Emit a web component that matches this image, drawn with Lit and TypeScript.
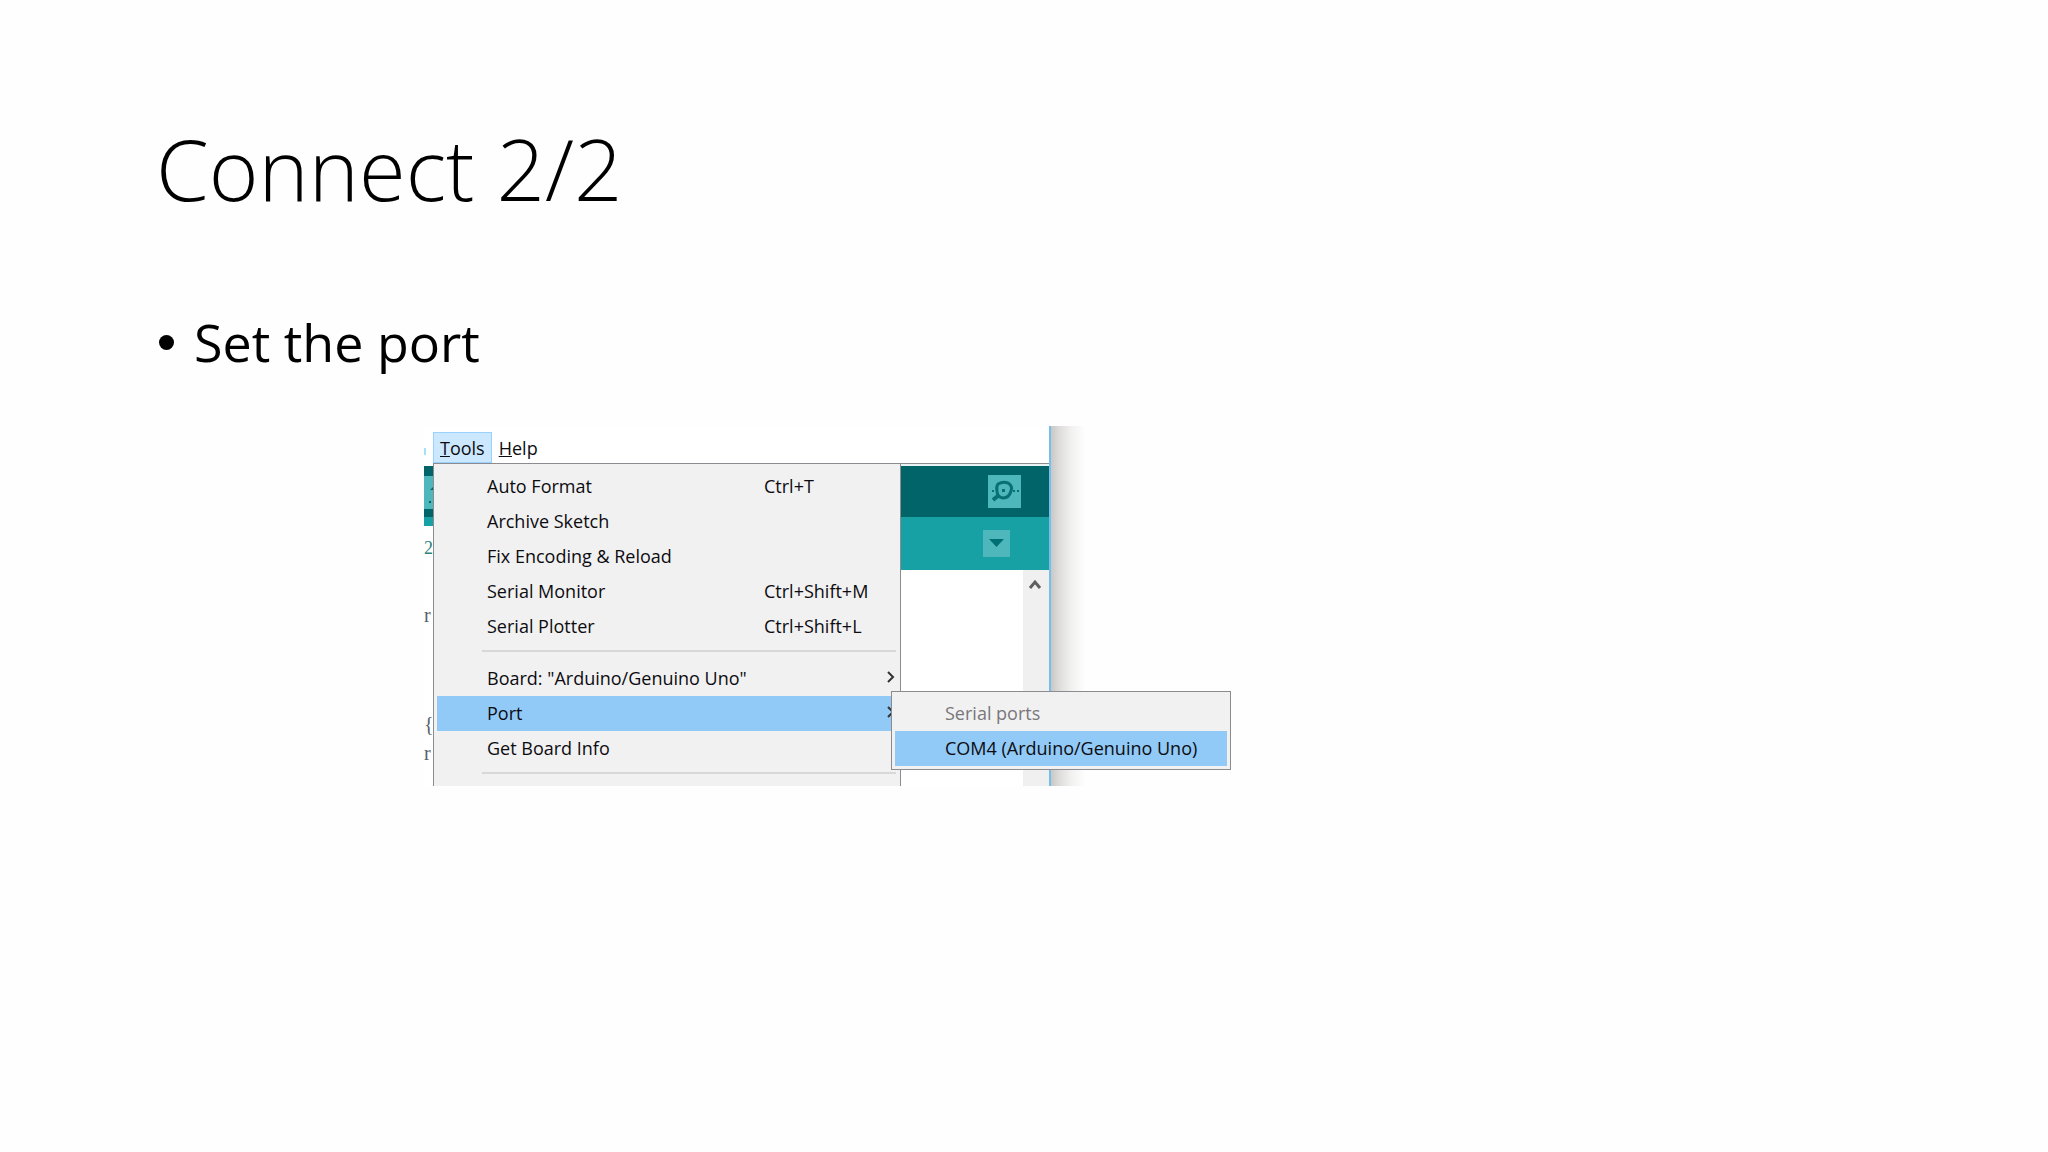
import { LitElement, html, css, svg, nothing } from "lit";
import { customElement, property } from "lit/decorators.js";

interface MenuEntry {
  label: string;
  shortcut?: string;
  submenu?: boolean;
  active?: boolean;
}

const GROUPS: MenuEntry[][] = [
  [
    { label: "Auto Format", shortcut: "Ctrl+T" },
    { label: "Archive Sketch" },
    { label: "Fix Encoding & Reload" },
    { label: "Serial Monitor", shortcut: "Ctrl+Shift+M" },
    { label: "Serial Plotter", shortcut: "Ctrl+Shift+L" },
  ],
  [
    { label: 'Board: "Arduino/Genuino Uno"', submenu: true },
    { label: "Port", submenu: true, active: true },
    { label: "Get Board Info" },
  ],
];

const chevronRight = svg`<path d="M1 1 L6 6 L1 11" fill="none" stroke="#333" stroke-width="2"/>`;

@customElement("tools-menu")
export class ToolsMenu extends LitElement {
  @property({ attribute: false }) groups: MenuEntry[][] = [];

  static styles = css`
    :host {
      display: block;
      position: relative;
      box-sizing: border-box;
      padding: 5px 4px 3px 3px;
      border: solid #8c8c90;
      border-width: 1px 1px 0;
      background: #f2f1f2;
      font-family: "Open Sans", "Noto Sans", sans-serif;
      font-size: 18px;
      line-height: 35px;
    }
    .item {
      display: grid;
      grid-template-columns: 277px 1fr auto;
      align-items: center;
      box-sizing: border-box;
      width: 100%;
      height: 35px;
      padding: 0 1px 0 50px;
      border: 0;
      background: none;
      color: #0c0c10;
      font: inherit;
      text-align: left;
      white-space: nowrap;
    }
    .active {
      background: #91c9f7;
    }
    .arrow {
      display: block;
      width: 8px;
      height: 12px;
      margin-bottom: 4px;
    }
    .separator {
      height: 2px;
      margin: 6px 0 9px 45px;
      border: 0;
      background: #d9d8d9;
    }
    .submenu {
      position: absolute;
      top: 227px;
      left: 457px;
      box-sizing: border-box;
      width: 340px;
      padding: 4px 3px 3px;
      border: 1px solid #8c8c90;
      background: #f2f1f2;
    }
    .submenu .item {
      display: block;
    }
    .submenu .item:disabled {
      color: #78777a;
    }
  `;

  private renderItem(entry: MenuEntry) {
    return html`<button class="item ${entry.active ? "active" : ""}" role="menuitem">
      <span>${entry.label}</span>
      <span>${entry.shortcut ?? nothing}</span>
      ${entry.submenu
        ? html`<svg class="arrow" viewBox="0 0 8 12" aria-hidden="true">${chevronRight}</svg>`
        : nothing}
    </button>`;
  }

  render() {
    return html`
      ${this.groups.map(
        (group) => html`${group.map((e) => this.renderItem(e))}<hr class="separator" />`
      )}
      <div class="submenu" role="menu">
        <button class="item" role="menuitem" disabled>Serial ports</button>
        <button class="item active" role="menuitem">COM4 (Arduino/Genuino Uno)</button>
      </div>
    `;
  }
}

@customElement("ide-window")
export class IdeWindow extends LitElement {
  static styles = css`
    :host {
      display: grid;
      grid-template-columns: 627px 34px;
      width: max-content;
      font-family: "Open Sans", "Noto Sans", sans-serif;
    }
    .frame {
      border-right: 2px solid #74bfec;
      background: #fff;
    }
    .menubar {
      display: flex;
      align-items: flex-end;
      height: 37px;
      font-size: 18px;
    }
    .edge {
      width: 2px;
      height: 7px;
      margin: 0 7px 8px 0;
      background: #a5e2f2;
    }
    .entry {
      box-sizing: border-box;
      height: 31px;
      padding: 0 6px;
      border: 1px solid transparent;
      background: none;
      color: #0c0c10;
      font: inherit;
      line-height: 28px;
    }
    .open {
      border-color: #99d1ff;
      background: #cce8ff;
    }
    .body {
      display: grid;
      grid-template-columns: 9px 468px 1fr;
    }
    .strip {
      display: flex;
      flex-direction: column;
      font-family: "Liberation Serif", serif;
      font-size: 20px;
      line-height: 20px;
      color: #55606a;
    }
    .strip-tools {
      height: 51px;
      box-sizing: border-box;
      margin-top: 3px;
      border: solid #006468;
      border-width: 10px 0 8px;
      background: #4db7bb;
    }
    .strip-art {
      display: block;
      width: 9px;
      height: 33px;
    }
    .strip-tabs {
      height: 9px;
      background: #17a1a5;
    }
    .number {
      margin-top: 12px;
      font-size: 18px;
      color: #2c8378;
    }
    .first {
      margin-top: 47px;
    }
    .brace {
      margin-top: 89px;
    }
    .last {
      margin-top: 9px;
    }
    .editor {
      display: flex;
      flex-direction: column;
      border-top: 1px solid #8c8c90;
    }
    .toolbar,
    .tabs {
      display: flex;
      justify-content: flex-end;
      align-items: center;
      box-sizing: border-box;
    }
    .toolbar {
      height: 53px;
      padding-right: 28px;
      border-top: 2px solid #e8f3f3;
      background: #006468;
    }
    .tabs {
      height: 53px;
      padding-right: 39px;
      background: #17a1a5;
    }
    .tool {
      padding: 0;
      border: 0;
      background: #4db7bb;
      line-height: 0;
    }
    .page {
      display: flex;
      flex: 1;
      justify-content: flex-end;
    }
    .scroll {
      width: 26px;
      background: #f1f0f1;
      line-height: 0;
    }
    .shadow {
      background: linear-gradient(90deg, #c9c8c6, #dedddb 25%, #f1f1f0 60%, #fefefe);
    }
  `;

  render() {
    return html`
      <div class="frame">
        <div class="menubar" role="menubar">
          <span class="edge"></span>
          <button class="entry open" role="menuitem"><u>T</u>ools</button>
          <button class="entry" role="menuitem"><u>H</u>elp</button>
        </div>
        <div class="body">
          <div class="strip">
            <div class="strip-tools">
              <svg class="strip-art" viewBox="0 0 9 33" aria-hidden="true">
                <path d="M6 14 L9 11 V14 Z M5 25 H7 V27 H5 Z" fill="#006468" />
              </svg>
            </div>
            <div class="strip-tabs"></div>
            <span class="number">2</span>
            <span class="first">r</span>
            <span class="brace">{</span>
            <span class="last">r</span>
          </div>
          <tools-menu role="menu" .groups=${GROUPS}></tools-menu>
          <div class="editor">
            <div class="toolbar">
              <button class="tool" aria-label="Serial Monitor">
                <svg width="33" height="33" viewBox="0 0 33 33">
                  <path
                    d="M10 9 Q15 6 20 8 Q25 11 23 16 Q21 23 15 23 Q9 22 9 16 Q8 12 10 9 Z"
                    fill="none"
                    stroke="#077075"
                    stroke-width="3"
                  />
                  <path d="M11 20 L5 25" stroke="#077075" stroke-width="4" />
                  <path d="M14 14 H17 V17 H14 Z M4 15 H6 V17 H4 Z M25 15 H27 V17 H25 Z M29 15 H31 V17 H29 Z" fill="#077075" />
                </svg>
              </button>
            </div>
            <div class="tabs">
              <button class="tool" aria-label="Tabs">
                <svg width="27" height="27" viewBox="0 0 27 27">
                  <path d="M6 9 H21 L13.5 17 Z" fill="#006f73" />
                </svg>
              </button>
            </div>
            <div class="page">
              <div class="scroll">
                <svg width="26" height="28" viewBox="0 0 26 28" aria-hidden="true">
                  <path d="M7 18 L12 12 L17 18" fill="none" stroke="#606060" stroke-width="3" />
                </svg>
              </div>
            </div>
          </div>
        </div>
      </div>
      <div class="shadow"></div>
    `;
  }
}

@customElement("app-root")
export class AppRoot extends LitElement {
  static styles = css`
    :host {
      display: block;
      box-sizing: border-box;
      min-height: 100vh;
      padding: 110px 156px 0;
      background: #fefefe;
      color: #000;
      font-family: "Open Sans", "Noto Sans", sans-serif;
    }
    .title {
      margin: 0;
      font-size: 85px;
      font-weight: 300;
      line-height: 116px;
    }
    .points {
      display: block;
      margin: 80px 0 0;
      padding: 0;
      list-style: none;
      font-size: 52px;
      line-height: 72px;
    }
    .point {
      display: flex;
      align-items: center;
      gap: 20px;
    }
    .bullet {
      width: 15px;
      height: 15px;
      margin-left: 3px;
      border-radius: 50%;
      background: #000;
    }
    .figure {
      margin: 48px 0 0 268px;
    }
  `;

  render() {
    return html`
      <h1 class="title">Connect 2/2</h1>
      <ul class="points">
        <li class="point"><span class="bullet"></span>Set the port</li>
      </ul>
      <figure class="figure"><ide-window></ide-window></figure>
    `;
  }
}
